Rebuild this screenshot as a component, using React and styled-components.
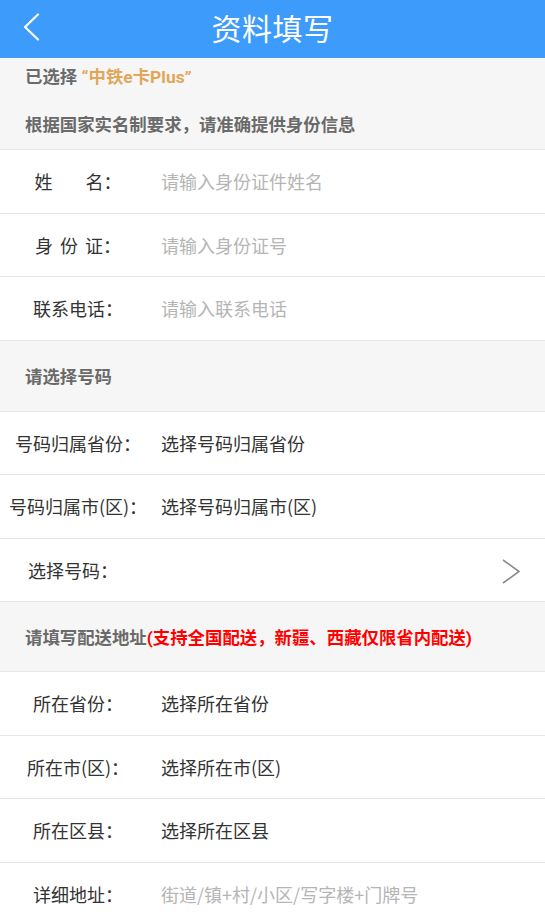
import React from "react";
import styled, { createGlobalStyle } from "styled-components";

const Global = createGlobalStyle`
  html, body { margin: 0; padding: 0; background: #ffffff; overflow: hidden; }
  body { font-family: "Roboto", "Noto Sans CJK SC", sans-serif; }
  * { box-sizing: border-box; }
`;

const Page = styled.div`
  width: 545px;
  display: flex;
  flex-direction: column;
  background: #fff;
`;

const Header = styled.header`
  height: 58px;
  background: #3d9bfb;
  display: flex;
  align-items: center;
  justify-content: center;
  position: relative;
`;

const BackButton = styled.button`
  position: absolute;
  left: 18px;
  top: 5px;
  width: 28px;
  height: 44px;
  padding: 0;
  border: 0;
  background: transparent;
  display: flex;
  align-items: center;
  justify-content: center;
`;

const Title = styled.h1`
  margin: -5px 0 0;
  font-family: "Noto Sans CJK SC", sans-serif;
  font-weight: 400;
  font-size: 30px;
  line-height: 40px;
  color: #fff;
  letter-spacing: 0.5px;
`;

const Notice = styled.section`
  height: 92px;
  background: #f6f6f6;
  border-bottom: 1px solid #e6e6e6;
  padding: 0 25px;
  display: flex;
  flex-direction: column;
`;

const NoticeLine = styled.div`
  font-family: "Roboto", "Noto Sans CJK SC", sans-serif;
  font-weight: 700;
  font-size: 17.4px;
  color: #6a6a6a;
  height: ${(p) => p.$h}px;
  line-height: ${(p) => p.$h}px;
  margin-top: ${(p) => p.$mt || 0}px;
  white-space: nowrap;
`;

const Gold = styled.span`
  color: #e2a659;
`;

const Red = styled.span`
  color: #ff0000;
`;

const SectionHead = styled.div`
  height: ${(p) => p.$h}px;
  background: #f6f6f6;
  border-bottom: 1px solid #e6e6e6;
  padding: 0 25px;
  display: flex;
  align-items: center;
  font-family: "Roboto", "Noto Sans CJK SC", sans-serif;
  font-weight: 700;
  font-size: 17.4px;
  color: #6a6a6a;
  white-space: nowrap;
`;

const Row = styled.div`
  height: 63.5px;
  border-bottom: 1px solid #e6e6e6;
  display: flex;
  align-items: center;
  position: relative;
  font-family: "Noto Sans CJK SC", sans-serif;
  font-size: 18px;
`;

const Label = styled.div`
  width: 156px;
  flex: none;
  text-align: center;
  color: #333;
  white-space: nowrap;
  padding-right: ${(p) => p.$shift || 0}px;
`;

const Spaced = styled.span`
  letter-spacing: ${(p) => p.$ls}px;
`;

const Value = styled.div`
  margin-left: 5px;
  flex: 1;
  color: ${(p) => (p.$placeholder ? "#b5b5b5" : "#333")};
  white-space: nowrap;
`;

const Arrow = styled.svg`
  position: absolute;
  right: 24px;
  top: 20px;
`;

const rows1 = [
  { label: <><Spaced $ls={33}>姓</Spaced>名：</>, value: "请输入身份证件姓名", ph: true },
  { label: <><Spaced $ls={7}>身份</Spaced>证：</>, value: "请输入身份证号", ph: true },
  { label: "联系电话：", value: "请输入联系电话", ph: true },
];

const rows2 = [
  { label: "号码归属省份：", value: "选择号码归属省份" },
  { label: "号码归属市(区)：", value: "选择号码归属市(区)" },
];

const rows3 = [
  { label: "所在省份：", value: "选择所在省份" },
  { label: "所在市(区)：", value: "选择所在市(区)" },
  { label: "所在区县：", value: "选择所在区县" },
  { label: "详细地址：", value: "街道/镇+村/小区/写字楼+门牌号", ph: true },
];

function FormRow({ label, value, ph, shift, children }) {
  return (
    <Row>
      <Label $shift={shift}>{label}</Label>
      <Value $placeholder={ph}>{value}</Value>
      {children}
    </Row>
  );
}

export default function App() {
  return (
    <Page>
      <Global />
      <Header>
        <BackButton aria-label="返回">
          <svg width="18" height="30" viewBox="0 0 18 30">
            <polyline
              points="15,2.5 2,15 15,27.5"
              fill="none"
              stroke="#fff"
              strokeWidth="2.2"
              strokeLinecap="round"
              strokeLinejoin="round"
            />
          </svg>
        </BackButton>
        <Title>资料填写</Title>
      </Header>

      <Notice>
        <NoticeLine $h={38}>
          已选择 <Gold>“中铁e卡Plus”</Gold>
        </NoticeLine>
        <NoticeLine $h={24} $mt={17}>
          根据国家实名制要求，请准确提供身份信息
        </NoticeLine>
      </Notice>

      {rows1.map((r, i) => (
        <FormRow key={i} label={r.label} value={r.value} ph={r.ph} />
      ))}

      <SectionHead $h={71}>请选择号码</SectionHead>

      {rows2.map((r, i) => (
        <FormRow key={i} label={r.label} value={r.value} ph={r.ph} />
      ))}
      <FormRow label="选择号码：" value="" shift={10}>
        <Arrow width="20" height="26" viewBox="0 0 20 26">
          <polyline
            points="2,1 18,12.5 2,24"
            fill="none"
            stroke="#8c8c8c"
            strokeWidth="1.6"
            strokeLinejoin="miter"
          />
        </Arrow>
      </FormRow>

      <SectionHead $h={70}>
        请填写配送地址<Red>(支持全国配送，新疆、西藏仅限省内配送)</Red>
      </SectionHead>

      {rows3.map((r, i) => (
        <FormRow key={i} label={r.label} value={r.value} ph={r.ph} />
      ))}
    </Page>
  );
}
